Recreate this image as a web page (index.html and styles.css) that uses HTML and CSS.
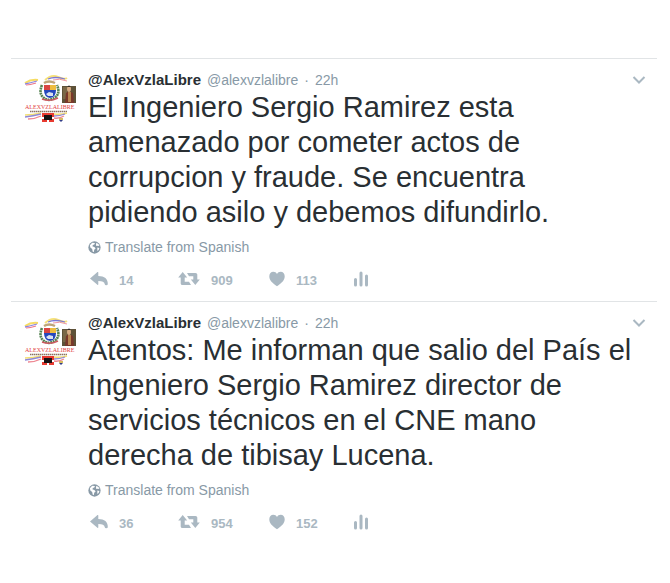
FILE: index.html
```html
<!DOCTYPE html>
<html lang="es">
<head>
<meta charset="utf-8">
<title>@AlexVzlaLibre</title>
<link rel="stylesheet" href="styles.css">
</head>
<body>
<svg class="sprite" aria-hidden="true">
  <symbol id="avatar" viewBox="0 0 52 52">
    <path d="M1 10Q7 6 14 7" fill="none" stroke="#f6dc62" stroke-width="2"/>
    <path d="M1 11Q6 10 13 8" fill="none" stroke="#8b87dd" stroke-width="1.3"/>
    <path d="M2 12Q6 12 12 10" fill="none" stroke="#ee7787" stroke-width="1.2"/>
    <path d="M21 7Q28 1 34 4T43 5" fill="none" stroke="#f6e17a" stroke-width="2"/>
    <path d="M24 6Q31 3 41 6" fill="none" stroke="#7c78d5" stroke-width="1.3"/>
    <path d="M29 7Q35 5 43 8" fill="none" stroke="#f099a2" stroke-width="1"/>
    <path d="M18 12Q13 24 25 27Q38 24 33 12" fill="none" stroke="#568354" stroke-width="2.6" stroke-dasharray="2 .6"/>
    <path d="M20 10Q25 7 31 10" fill="none" stroke="#bda477" stroke-width="2.5"/>
    <path d="M20 12h6v6h-6z" fill="#d94542"/>
    <path d="M26 12h6v6h-6z" fill="#edbd40"/>
    <path d="M20 17h12q0 7-6 8-6-1-6-8z" fill="#2447bd"/>
    <path d="M22 21l3-2 4 1v3h-5z" fill="#d9e2ef"/>
    <path d="M18 26q8 3 16-1" fill="none" stroke="#cc5960" stroke-width="1.5"/>
    <path d="M38 13h14v17H38z" fill="#5e5238"/>
    <path d="M39 14h4v12h-4z" fill="#796747"/>
    <path d="M41 30l1-10 3-2 4 2 1 10z" fill="#79382b"/>
    <path d="M44 19h3v10h-3z" fill="#b98651"/>
    <ellipse cx="45" cy="16" rx="2" ry="3" fill="#d8ad86"/>
    <path d="M43 14q2-3 4 0z" fill="#302b25"/>
    <path d="M6 38.500h37" stroke="#8b7262" stroke-width="1.500" stroke-dasharray="1.5 .5"/>
    <path d="M1 42q8 0 16-2M30 41q6 1 13-1" fill="none" stroke="#f3df73" stroke-width="1.5"/>
    <path d="M1 44q8-1 16-3M30 43q6 0 11-2" fill="none" stroke="#8f88d6" stroke-width="1.3"/>
    <path d="M4 46q7 0 13-3M30 45q5 1 10-2" fill="none" stroke="#ee8792" stroke-width="1.3"/>
    <path d="M18 40h12v9H18z" fill="#e83b31"/>
    <path d="M20 42h8v5h-8z" fill="#171313"/>
    <path d="M18 44h2v2h-2zM28 44h2v2h-2zM23 47h2v2h-2z" fill="#fff"/>
    <path d="M35 45h4v2h-4z" fill="#d5bb62"/>
    <path d="M35 47h4l-2 2z" fill="#303b86"/>
  </symbol>
  <symbol id="chevron" viewBox="0 0 14 10">
    <path d="M1.500 2L7 7.500 12.500 2" fill="none" stroke="currentColor" stroke-width="2"/>
  </symbol>
  <symbol id="globe" viewBox="0 0 14 14">
    <circle cx="7" cy="7" r="6.600" fill="currentColor"/>
    <path d="M2 4.500L4.500 2l3 .2-.7 1.500-1.500.7-.6 1.300 2.500 1 1 1.500-1.500 1.200-.4 2.500-1.200-.4-.6-3L2.500 7zM9 2l2.500 1.500.8 2-1.600-.5L9 5.500 8.600 4zM10 7l2.300.5-.8 2.300-1.400 1z" fill="#fff"/>
  </symbol>
  <symbol id="reply" viewBox="0 0 18 16">
    <path d="M0 7.500L7.500 1q.8-.4.800.6V5C14.500 5 18 7.800 17.800 13.200q-.2 1-1.600 1-1.400 0-1.500-1.200C14.500 11 12.500 10 8.300 10v3.300q0 1-.9.500z" fill="currentColor"/>
  </symbol>
  <symbol id="retweet" viewBox="0 0 22 16">
    <path d="M4.700 1L9.200 6.500H6.700V10.700H11L13 14H4.500Q2.700 14 2.700 12.500V6.500H.2zM9 2h8.500Q19.300 2 19.300 3.500V8.500h2.500L17.300 14 12.800 8.500h2.500V5.300H11z" fill="currentColor"/>
  </symbol>
  <symbol id="heart" viewBox="0 0 16 16">
    <path d="M8 15.300C3 11.800.3 9 .3 5.200.3 2.500 2 .7 4.300.7 6 .7 7.200 1.600 8 3 8.800 1.600 10 .7 11.700.7 14 .7 15.700 2.500 15.700 5.200 15.700 9 13 11.800 8 15.300z" fill="currentColor"/>
  </symbol>
  <symbol id="bars" viewBox="0 0 14 16">
    <path d="M1.500 8.500v5.500M7 2v12M12.500 5v9" fill="none" stroke="currentColor" stroke-width="3" stroke-linecap="round"/>
  </symbol>
</svg>
<main class="timeline">
  <article class="tweet">
    <svg class="avatar" viewBox="0 0 52 52" role="img" aria-label="AlexVzlaLibre"><use href="#avatar"/><text x="1" y="36" class="avatar-name">ALEXVZLALIBRE</text></svg>
    <div class="content">
      <header class="header">
        <a class="name" href="#">@AlexVzlaLibre</a>
        <a class="meta" href="#">@alexvzlalibre</a>
        <span class="meta">·</span>
        <a class="meta" href="#">22h</a>
        <button class="more" type="button" aria-label="More"><svg class="chevron"><use href="#chevron"/></svg></button>
      </header>
      <p class="text">El Ingeniero Sergio Ramirez esta amenazado por cometer actos de corrupcion y fraude. Se encuentra pidiendo asilo y debemos difundirlo.</p>
      <button class="translate" type="button"><svg class="globe"><use href="#globe"/></svg>Translate from Spanish</button>
      <footer class="actions">
        <button class="action" type="button" aria-label="Reply 14"><svg class="icon reply"><use href="#reply"/></svg>14</button>
        <button class="action" type="button" aria-label="Retweet 909"><svg class="icon retweet"><use href="#retweet"/></svg>909</button>
        <button class="action" type="button" aria-label="Like 113"><svg class="icon heart"><use href="#heart"/></svg>113</button>
        <button class="action" type="button" aria-label="Activity"><svg class="icon bars"><use href="#bars"/></svg></button>
      </footer>
    </div>
  </article>
  <article class="tweet">
    <svg class="avatar" viewBox="0 0 52 52" role="img" aria-label="AlexVzlaLibre"><use href="#avatar"/><text x="1" y="36" class="avatar-name">ALEXVZLALIBRE</text></svg>
    <div class="content">
      <header class="header">
        <a class="name" href="#">@AlexVzlaLibre</a>
        <a class="meta" href="#">@alexvzlalibre</a>
        <span class="meta">·</span>
        <a class="meta" href="#">22h</a>
        <button class="more" type="button" aria-label="More"><svg class="chevron"><use href="#chevron"/></svg></button>
      </header>
      <p class="text">Atentos: Me informan que salio del País el Ingeniero Sergio Ramirez director de servicios técnicos en el CNE mano derecha de tibisay Lucena.</p>
      <button class="translate" type="button"><svg class="globe"><use href="#globe"/></svg>Translate from Spanish</button>
      <footer class="actions">
        <button class="action" type="button" aria-label="Reply 36"><svg class="icon reply"><use href="#reply"/></svg>36</button>
        <button class="action" type="button" aria-label="Retweet 954"><svg class="icon retweet"><use href="#retweet"/></svg>954</button>
        <button class="action" type="button" aria-label="Like 152"><svg class="icon heart"><use href="#heart"/></svg>152</button>
        <button class="action" type="button" aria-label="Activity"><svg class="icon bars"><use href="#bars"/></svg></button>
      </footer>
    </div>
  </article>
</main>
</body>
</html>
```
FILE: styles.css
```css
* {
  box-sizing: border-box;
}

body {
  margin: 0;
  background: #fff;
  color: #292f33;
  font-family: "Liberation Sans", Arial, sans-serif;
}

.sprite {
  position: absolute;
  width: 0;
  height: 0;
}

button {
  display: flex;
  align-items: center;
  padding: 0;
  border: 0;
  background: none;
  font: inherit;
  cursor: pointer;
}

a {
  text-decoration: none;
}

svg {
  flex: none;
}

.timeline {
  padding: 58px 13px 0 11px;
}

.tweet {
  display: flex;
  gap: 12px;
  padding: 11px 11px 11px 13px;
  border-top: 1px solid #e1e4e6;
}

.avatar {
  width: 52px;
  height: 52px;
  margin-top: 3px;
}

.avatar-name {
  fill: #df3c42;
  font-family: "Liberation Serif", serif;
  font-size: 6px;
}

.content {
  flex: 1;
  min-width: 0;
}

.header {
  display: flex;
  align-items: center;
  gap: 6px;
  font-size: 14px;
  line-height: 20px;
}

.name {
  color: #292f33;
  font-size: 15px;
  font-weight: bold;
}

.meta {
  color: #8899a6;
}

.more {
  margin-left: auto;
  color: #aab8c2;
}

.chevron {
  width: 14px;
  height: 10px;
}

.text {
  margin: 0;
  padding-right: 12px;
  font-size: 29px;
  line-height: 35px;
}

.translate {
  gap: 4px;
  margin-top: 8px;
  color: #8899a6;
  font-size: 14px;
  line-height: 18px;
}

.globe {
  width: 13px;
  height: 13px;
}

.actions {
  display: grid;
  grid-template-columns: 88px 91px 85px auto;
  justify-content: start;
  margin-top: 14px;
  padding-left: 2px;
}

.action {
  gap: 11px;
  height: 20px;
  color: #aab8c2;
  font-size: 13px;
  font-weight: bold;
}

.icon {
  height: 16px;
  margin-bottom: 2px;
}

.reply {
  width: 18px;
}

.retweet {
  width: 22px;
}

.heart {
  width: 16px;
}

.bars {
  width: 14px;
}
```
